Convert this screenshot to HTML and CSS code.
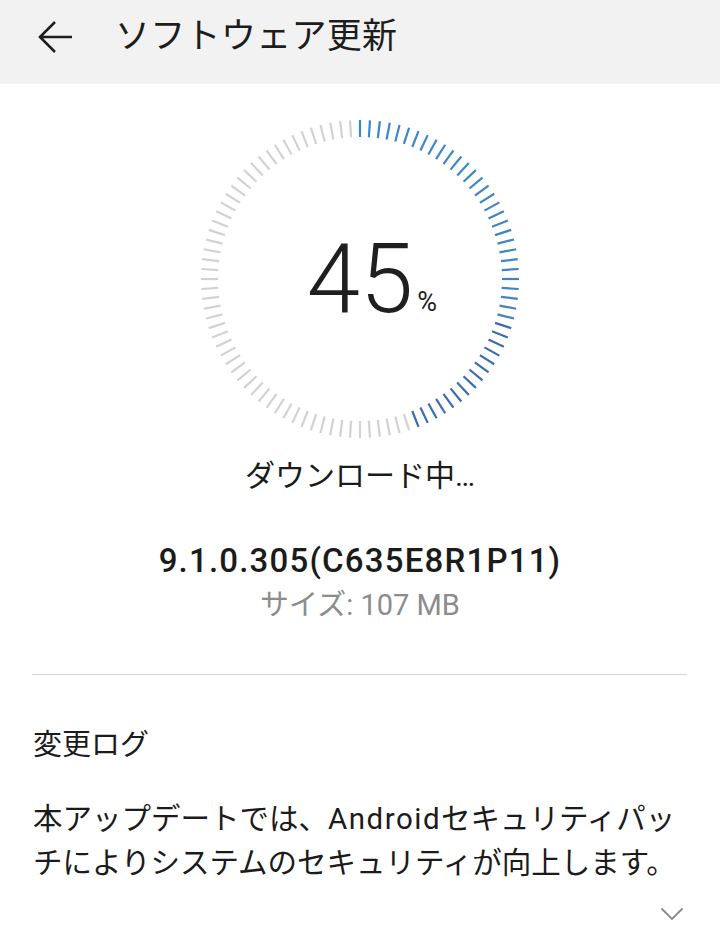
FILE: index.html
```html
<!DOCTYPE html>
<html lang="ja">
<head>
<meta charset="utf-8">
<title>ソフトウェア更新</title>
<link rel="stylesheet" href="styles.css">
</head>
<body>
<header class="appbar">
  <svg class="back" width="38" height="36" viewBox="0 0 38 36" aria-hidden="true">
    <path d="M36 18H4M19 3L4 18L19 33" fill="none" stroke="#1f1f1f" stroke-width="2.6" stroke-linecap="butt" stroke-linejoin="miter"/>
  </svg>
  <h1 class="title">ソフトウェア更新</h1>
</header>

<main class="content">
  <div class="dial">
    <svg class="ticks" width="340" height="340" viewBox="0 0 340 340" aria-hidden="true">
      <defs><line id="t" x1="170" y1="11" x2="170" y2="28"/></defs>
      <g class="b1">
        <use href="#t" transform="rotate(0 170 170)"/>
        <use href="#t" transform="rotate(3.6 170 170)"/>
        <use href="#t" transform="rotate(7.2 170 170)"/>
        <use href="#t" transform="rotate(10.8 170 170)"/>
        <use href="#t" transform="rotate(14.4 170 170)"/>
        <use href="#t" transform="rotate(18 170 170)"/>
        <use href="#t" transform="rotate(21.6 170 170)"/>
        <use href="#t" transform="rotate(25.2 170 170)"/>
        <use href="#t" transform="rotate(28.8 170 170)"/>
        <use href="#t" transform="rotate(32.4 170 170)"/>
        <use href="#t" transform="rotate(36 170 170)"/>
        <use href="#t" transform="rotate(39.6 170 170)"/>
        <use href="#t" transform="rotate(43.2 170 170)"/>
        <use href="#t" transform="rotate(46.8 170 170)"/>
        <use href="#t" transform="rotate(50.4 170 170)"/>
      </g>
      <g class="b2">
        <use href="#t" transform="rotate(54 170 170)"/>
        <use href="#t" transform="rotate(57.6 170 170)"/>
        <use href="#t" transform="rotate(61.2 170 170)"/>
        <use href="#t" transform="rotate(64.8 170 170)"/>
        <use href="#t" transform="rotate(68.4 170 170)"/>
        <use href="#t" transform="rotate(72 170 170)"/>
        <use href="#t" transform="rotate(75.6 170 170)"/>
        <use href="#t" transform="rotate(79.2 170 170)"/>
        <use href="#t" transform="rotate(82.8 170 170)"/>
        <use href="#t" transform="rotate(86.4 170 170)"/>
        <use href="#t" transform="rotate(90 170 170)"/>
        <use href="#t" transform="rotate(93.6 170 170)"/>
        <use href="#t" transform="rotate(97.2 170 170)"/>
        <use href="#t" transform="rotate(100.8 170 170)"/>
        <use href="#t" transform="rotate(104.4 170 170)"/>
      </g>
      <g class="b3">
        <use href="#t" transform="rotate(108 170 170)"/>
        <use href="#t" transform="rotate(111.6 170 170)"/>
        <use href="#t" transform="rotate(115.2 170 170)"/>
        <use href="#t" transform="rotate(118.8 170 170)"/>
        <use href="#t" transform="rotate(122.4 170 170)"/>
        <use href="#t" transform="rotate(126 170 170)"/>
        <use href="#t" transform="rotate(129.6 170 170)"/>
        <use href="#t" transform="rotate(133.2 170 170)"/>
        <use href="#t" transform="rotate(136.8 170 170)"/>
        <use href="#t" transform="rotate(140.4 170 170)"/>
        <use href="#t" transform="rotate(144 170 170)"/>
        <use href="#t" transform="rotate(147.6 170 170)"/>
        <use href="#t" transform="rotate(151.2 170 170)"/>
        <use href="#t" transform="rotate(154.8 170 170)"/>
        <use href="#t" transform="rotate(158.4 170 170)"/>
      </g>
      <g class="gr">
        <use href="#t" transform="rotate(162 170 170)"/>
        <use href="#t" transform="rotate(165.6 170 170)"/>
        <use href="#t" transform="rotate(169.2 170 170)"/>
        <use href="#t" transform="rotate(172.8 170 170)"/>
        <use href="#t" transform="rotate(176.4 170 170)"/>
        <use href="#t" transform="rotate(180 170 170)"/>
        <use href="#t" transform="rotate(183.6 170 170)"/>
        <use href="#t" transform="rotate(187.2 170 170)"/>
        <use href="#t" transform="rotate(190.8 170 170)"/>
        <use href="#t" transform="rotate(194.4 170 170)"/>
        <use href="#t" transform="rotate(198 170 170)"/>
        <use href="#t" transform="rotate(201.6 170 170)"/>
        <use href="#t" transform="rotate(205.2 170 170)"/>
        <use href="#t" transform="rotate(208.8 170 170)"/>
        <use href="#t" transform="rotate(212.4 170 170)"/>
        <use href="#t" transform="rotate(216 170 170)"/>
        <use href="#t" transform="rotate(219.6 170 170)"/>
        <use href="#t" transform="rotate(223.2 170 170)"/>
        <use href="#t" transform="rotate(226.8 170 170)"/>
        <use href="#t" transform="rotate(230.4 170 170)"/>
        <use href="#t" transform="rotate(234 170 170)"/>
        <use href="#t" transform="rotate(237.6 170 170)"/>
        <use href="#t" transform="rotate(241.2 170 170)"/>
        <use href="#t" transform="rotate(244.8 170 170)"/>
        <use href="#t" transform="rotate(248.4 170 170)"/>
        <use href="#t" transform="rotate(252 170 170)"/>
        <use href="#t" transform="rotate(255.6 170 170)"/>
        <use href="#t" transform="rotate(259.2 170 170)"/>
        <use href="#t" transform="rotate(262.8 170 170)"/>
        <use href="#t" transform="rotate(266.4 170 170)"/>
        <use href="#t" transform="rotate(270 170 170)"/>
        <use href="#t" transform="rotate(273.6 170 170)"/>
        <use href="#t" transform="rotate(277.2 170 170)"/>
        <use href="#t" transform="rotate(280.8 170 170)"/>
        <use href="#t" transform="rotate(284.4 170 170)"/>
        <use href="#t" transform="rotate(288 170 170)"/>
        <use href="#t" transform="rotate(291.6 170 170)"/>
        <use href="#t" transform="rotate(295.2 170 170)"/>
        <use href="#t" transform="rotate(298.8 170 170)"/>
        <use href="#t" transform="rotate(302.4 170 170)"/>
        <use href="#t" transform="rotate(306 170 170)"/>
        <use href="#t" transform="rotate(309.6 170 170)"/>
        <use href="#t" transform="rotate(313.2 170 170)"/>
        <use href="#t" transform="rotate(316.8 170 170)"/>
        <use href="#t" transform="rotate(320.4 170 170)"/>
        <use href="#t" transform="rotate(324 170 170)"/>
        <use href="#t" transform="rotate(327.6 170 170)"/>
        <use href="#t" transform="rotate(331.2 170 170)"/>
        <use href="#t" transform="rotate(334.8 170 170)"/>
        <use href="#t" transform="rotate(338.4 170 170)"/>
        <use href="#t" transform="rotate(342 170 170)"/>
        <use href="#t" transform="rotate(345.6 170 170)"/>
        <use href="#t" transform="rotate(349.2 170 170)"/>
        <use href="#t" transform="rotate(352.8 170 170)"/>
        <use href="#t" transform="rotate(356.4 170 170)"/>
      </g>
    </svg>
    <div class="readout"><span class="num">45<span class="pct">%</span></span></div>
  </div>

  <p class="status">ダウンロード中…</p>

  <div class="pkg">
    <p class="version">9.1.0.305(C635E8R1P11)</p>
    <p class="size">サイズ: 107 MB</p>
  </div>

  <div class="divider"></div>

  <section class="log">
    <h2 class="log-title">変更ログ</h2>
    <p class="log-body">本アップデートでは、<span class="latin">Android</span>セキュリティパッ<br>チによりシステムのセキュリティが向上します。</p>
    <div class="more">
      <svg width="24" height="14" viewBox="0 0 24 14" aria-hidden="true">
        <path d="M1.5 1.5L12 12L22.5 1.5" fill="none" stroke="#8a8a8a" stroke-width="1.8"/>
      </svg>
    </div>
  </section>
</main>
</body>
</html>
```

FILE: styles.css
```css
* { box-sizing: border-box; }
html, body { margin: 0; padding: 0; }
body {
  width: 720px;
  height: 938px;
  overflow: hidden;
  background: #ffffff;
  color: #1b1b1b;
  font-family: Roboto, "Noto Sans CJK JP", sans-serif;
}
p, h1, h2 { margin: 0; font-weight: 400; }

.appbar {
  height: 84px;
  background: #f2f2f2;
  display: flex;
  align-items: center;
  padding: 0 0 10px 36px;
}
.back { flex: none; display: block; }
.title {
  margin-left: 41px;
  font-size: 35px;
  line-height: 44px;
  letter-spacing: 0.3px;
  color: #1d1d1d;
}

.content { display: flex; flex-direction: column; }

.dial {
  position: relative;
  width: 340px;
  height: 340px;
  margin: 25px auto 0;
}
.ticks { display: block; }
.ticks use { stroke-width: 2.2; }
.gr { stroke: #d2d2d2; }
.b1 { stroke: #3a88cc; }
.b2 { stroke: #4482c4; }
.b3 { stroke: #3d6cb3; }

.readout {
  position: absolute;
  left: 0;
  right: 0;
  top: 122px;
  text-align: center;
}
.num {
  position: relative;
  display: inline-block;
  font-size: 96px;
  font-weight: 300;
  line-height: 96px;
  color: #1f1f1f;
}
.pct {
  position: absolute;
  left: 100%;
  bottom: 11px;
  margin-left: 4px;
  font-size: 27px;
  line-height: 27px;
  font-weight: 400;
}

.status {
  margin-top: 7px;
  text-align: center;
  font-size: 30px;
  line-height: 40px;
}

.pkg { margin-top: 43px; text-align: center; }
.version {
  font-size: 33px;
  font-weight: 500;
  letter-spacing: 1.2px;
  line-height: 44px;
}
.size {
  margin-top: 4px;
  font-size: 29px;
  line-height: 36px;
  color: #8c8c8c;
}

.divider {
  margin: 51px 33px 0 32px;
  height: 1px;
  background: #d4d4d4;
}

.log { padding: 0 33px; }
.log-title {
  margin-top: 50px;
  font-size: 29px;
  line-height: 40px;
}
.log-body {
  margin-top: 32px;
  font-size: 29.5px;
  line-height: 44px;
}
.latin { letter-spacing: 1.5px; }
.more {
  display: flex;
  justify-content: flex-end;
  padding-right: 3px;
  margin-top: 22px;
}
.more svg { display: block; }
```
